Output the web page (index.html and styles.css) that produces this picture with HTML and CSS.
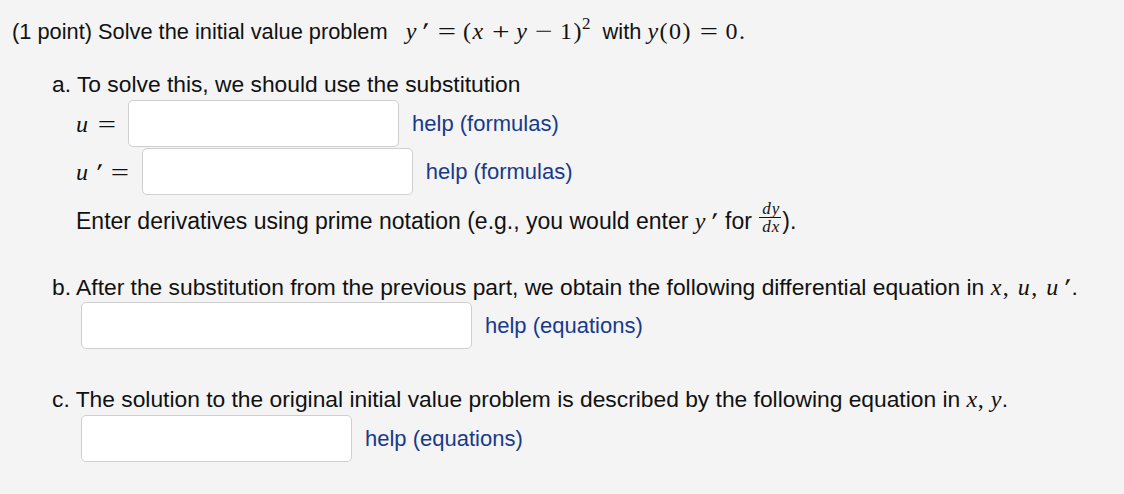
FILE: index.html
```html
<!DOCTYPE html>
<html>
<head>
<meta charset="utf-8">
<link rel="stylesheet" href="styles.css">
</head>
<body>
<div class="problem">
  <p class="intro">(1 point) Solve the initial value problem <span class="math math-lead"><i>y</i><span class="prime">′</span><span class="rel">=</span>(<i>x</i><span class="bin">+</span><i>y</i><span class="bin">−</span>1)<sup>2</sup></span> with <span class="math"><i>y</i>(0)<span class="rel">=</span>0.</span></p>

  <div class="part part-a">
    <p class="part-title">a. To solve this, we should use the substitution</p>
    <div class="row">
      <span class="math label"><i>u</i><span class="rel">=</span></span>
      <span class="field"></span>
      <a class="help">help (formulas)</a>
    </div>
    <div class="row">
      <span class="math label"><i>u</i><span class="prime prime-wide">′</span><span class="rel">=</span></span>
      <span class="field"></span>
      <a class="help">help (formulas)</a>
    </div>
    <p class="note">Enter derivatives using prime notation (e.g., you would enter <span class="math"><i>y</i><span class="prime">′</span></span> for <span class="frac"><span class="num"><i>dy</i></span><span class="den"><i>dx</i></span></span>).</p>
  </div>

  <div class="part part-b">
    <p class="part-title">b. After the substitution from the previous part, we obtain the following differential equation in <span class="math"><i>x</i>, <i>u</i>, <i>u</i><span class="prime">′</span></span>.</p>
    <div class="row row-plain">
      <span class="field field-wide"></span>
      <a class="help">help (equations)</a>
    </div>
  </div>

  <div class="part part-c">
    <p class="part-title">c. The solution to the original initial value problem is described by the following equation in <span class="math math-tight"><i>x</i>, <i>y</i></span>.</p>
    <div class="row row-plain">
      <span class="field"></span>
      <a class="help">help (equations)</a>
    </div>
  </div>
</div>
</body>
</html>
```

FILE: styles.css
```css
html, body {
  margin: 0;
  padding: 0;
  background: #f4f4f4;
}

body {
  font-family: "Liberation Sans", Arial, Helvetica, sans-serif;
  font-size: 22px;
  color: #111;
}

.problem {
  padding: 19px 0 0 12px;
}

p {
  margin: 0;
  line-height: 24px;
  height: 24px;
  white-space: nowrap;
}

.intro {
  font-size: 21.8px;
}

.part-title {
  font-size: 22.8px;
}

.math {
  font-family: "Liberation Serif", "Times New Roman", serif;
  font-size: 24px;
  line-height: 24px;
  letter-spacing: 1.5px;
  word-spacing: 0;
  white-space: nowrap;
}

.math-lead {
  margin-left: 12px;
  margin-right: 6px;
}

.math-tight {
  letter-spacing: 0.5px;
}

.math i {
  font-style: italic;
}

.math .rel {
  display: inline-block;
  margin: 0 10px;
  transform: scaleX(1.35);
  letter-spacing: 0;
}

.math .bin {
  display: inline-block;
  margin: 0 9px;
  transform: scaleX(1.3);
  letter-spacing: 0;
}

.math sup {
  font-size: 17px;
  line-height: 0;
  vertical-align: 10px;
  margin-left: -1px;
  letter-spacing: 0;
}

.prime {
  display: inline-block;
  font-style: italic;
  font-weight: bold;
  transform: skewX(-12deg);
  margin-left: 3px;
  margin-right: 2px;
  letter-spacing: 0;
}

.prime-wide {
  margin-left: 5px;
  margin-right: 2px;
}

.part {
  padding-left: 40px;
}

.part-a {
  margin-top: 29px;
}

.part-b {
  margin-top: 45px;
}

.part-c {
  margin-top: 38px;
}

.row {
  display: flex;
  align-items: center;
  padding-left: 24px;
  height: 47px;
}

.part-title + .row {
  margin-top: 4px;
}

.row + .row {
  margin-top: 1px;
}

.row-plain {
  padding-left: 29px;
}

.part-b .part-title + .row {
  margin-top: 3px;
}

.label {
  margin-right: 5px;
}

.field {
  display: block;
  box-sizing: border-box;
  width: 271px;
  height: 47px;
  background: #fff;
  border: 1px solid #cfcfcf;
  border-radius: 5px;
}

.field-wide {
  width: 391px;
}

.help {
  margin-left: 13px;
  color: #183a8c;
  text-decoration: none;
}

.note {
  margin-top: 11px;
  padding-left: 24px;
  font-size: 23px;
}

.frac {
  display: inline-flex;
  flex-direction: column;
  align-items: center;
  vertical-align: middle;
  font-family: "Liberation Serif", "Times New Roman", serif;
  font-size: 17px;
  line-height: 15px;
  margin: 0 1px 0 1px;
  letter-spacing: 1px;
  position: relative;
  top: -5px;
}

.frac .num {
  border-bottom: 1px solid #111;
  padding: 0 1px 1px 3px;
}

.frac .den {
  padding: 1px 0 0 2px;
}
```
